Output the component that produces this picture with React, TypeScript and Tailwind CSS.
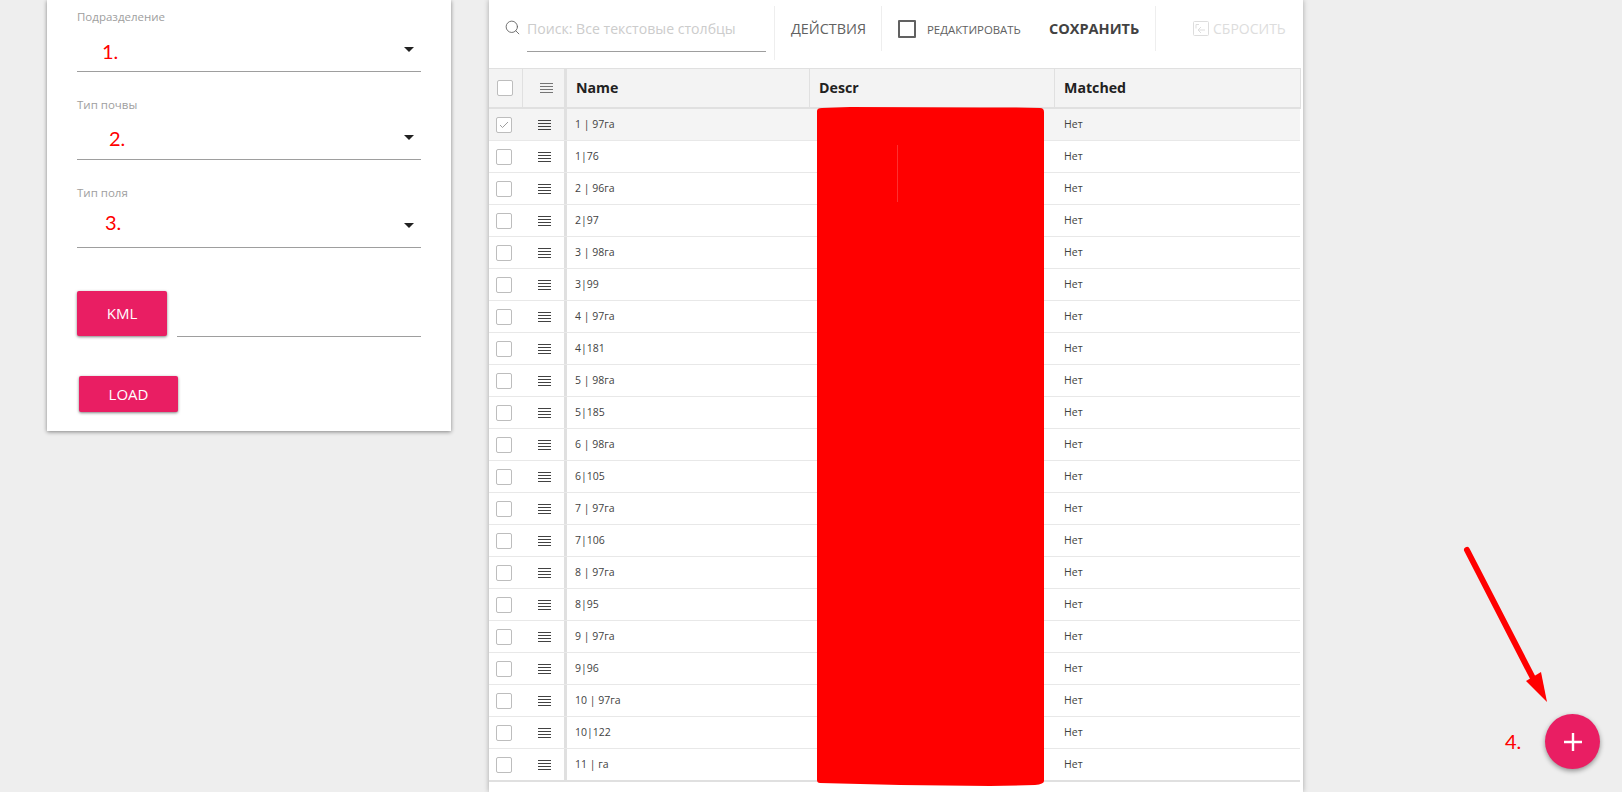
import { Search } from "lucide-react";

const rows = [
  "1 | 97га", "1|76", "2 | 96га", "2|97", "3 | 98га", "3|99", "4 | 97га", "4|181",
  "5 | 98га", "5|185", "6 | 98га", "6|105", "7 | 97га", "7|106", "8 | 97га", "8|95",
  "9 | 97га", "9|96", "10 | 97га", "10|122", "11 | га",
];

const fields = [
  { label: "Подразделение", mark: "1.", pad: "pl-[25px]", top: "pt-[15px]" },
  { label: "Тип почвы", mark: "2.", pad: "pl-[32px]", top: "pt-[14px]" },
  { label: "Тип поля", mark: "3.", pad: "pl-[28px]", top: "pt-[10px]" },
];

function Lines() {
  return (
    <svg width="13" height="10" viewBox="0 0 13 10">
      <path d="M0 0.5h13M0 3.5h13M0 6.5h13M0 9.5h13" stroke="currentColor" strokeWidth="1" fill="none" />
    </svg>
  );
}

function Box({ checked }: { checked?: boolean }) {
  return (
    <div className="w-4 h-4 rounded-[2px] border border-[#bdbdbd] bg-white flex items-center justify-center shrink-0">
      {checked && (
        <svg width="10" height="8" viewBox="0 0 10 8">
          <path d="M1 4l2.5 2.5L9 1" stroke="#9e9e9e" strokeWidth="1" fill="none" />
        </svg>
      )}
    </div>
  );
}

function Field({ label, mark, pad, top }: (typeof fields)[number]) {
  return (
    <div className="h-[88px] pt-[27px] flex flex-col">
      <label className="text-[11.5px] leading-[12px] text-[#9e9e9e]">{label}</label>
      <div className={`flex-1 flex justify-between border-b border-[#9e9e9e] ${pad}`}>
        <span className={`text-[20px] leading-[26px] text-[#ff0000] font-['Lato'] ${top}`}>{mark}</span>
        <div className="w-0 h-0 mt-[24px] mr-[7px] border-x-[5px] border-x-transparent border-t-[5px] border-t-[#212121]" />
      </div>
    </div>
  );
}

export default function App() {
  return (
    <div className="relative h-[792px] overflow-hidden bg-[#eeeeee] font-['Open_Sans',sans-serif] flex items-start pl-[47px] gap-[38px]">
      <div className="w-[404px] h-[431px] shrink-0 bg-white px-[30px] flex flex-col shadow-[0_1px_4px_rgba(0,0,0,0.45)]">
        <div className="-mt-[16px]">
          {fields.map((f) => (
            <Field key={f.label} {...f} />
          ))}
        </div>
        <div className="flex items-end gap-[10px] mt-[43px]">
          <button className="w-[90px] h-[45px] rounded-[2px] bg-[#e91e63] text-white text-[15px] shadow-[0_1px_3px_rgba(0,0,0,0.5)]">KML</button>
          <div className="flex-1 border-b border-[#9e9e9e] -mb-px" />
        </div>
        <button className="w-[99px] h-[36px] ml-[2px] mt-[40px] rounded-[2px] bg-[#e91e63] text-white text-[15px] shadow-[0_1px_3px_rgba(0,0,0,0.5)]">LOAD</button>
      </div>

      <div className="w-[814px] h-[792px] shrink-0 bg-white shadow-[0_0_5px_rgba(0,0,0,0.3)]">
        <div className="h-[68px] flex items-start relative">
          <Search size={17} strokeWidth={1.25} className="text-[#616161] mt-[19px] ml-[15px] shrink-0" />
          <div className="w-[239px] h-[52px] ml-[6px] pt-[19px] border-b border-[#9e9e9e] text-[14.1px] leading-[20px] text-[#cccccc] shrink-0 whitespace-nowrap">Поиск: Все текстовые столбцы</div>
          <div className="w-px h-[54px] mt-[6px] ml-[8px] bg-[#eeeeee]" />
          <div className="ml-[16px] pt-[19px] text-[14.4px] leading-[20px] text-[#616161] w-[75px] whitespace-nowrap">ДЕЙСТВИЯ</div>
          <div className="w-px h-[45px] mt-[6px] ml-[15px] bg-[#eeeeee]" />
          <div className="w-[18px] h-[18px] mt-[20px] ml-[16px] border-2 border-[#616161] rounded-[1px]" />
          <div className="ml-[11px] pt-[20px] text-[11.4px] leading-[20px] text-[#616161] w-[94px] whitespace-nowrap">РЕДАКТИРОВАТЬ</div>
          <div className="ml-[28px] pt-[19px] text-[14.5px] leading-[20px] font-bold text-[#424242] w-[90px] whitespace-nowrap">СОХРАНИТЬ</div>
          <div className="w-px h-[45px] mt-[6px] ml-[16px] bg-[#eeeeee]" />
          <svg width="16" height="15" viewBox="0 0 16 15" className="mt-[21px] ml-[37px] text-[#dddddd]">
            <rect x="0.5" y="0.5" width="15" height="14" rx="1" fill="none" stroke="currentColor" />
            <path d="M12 9H5.5M8 6L5 9l3 3M6 3.5h-3v4" fill="none" stroke="currentColor" />
          </svg>
          <div className="ml-[4px] pt-[19px] text-[14px] leading-[20px] text-[#dddddd] whitespace-nowrap">СБРОСИТЬ</div>
        </div>

        <div className="w-[812px]">
          <div className="h-[41px] flex bg-[#f3f3f3] border-y border-[#e0e0e0] border-b-2 text-[14.2px] font-bold text-[#212121]">
            <div className="w-[34px] border-r border-[#e0e0e0] flex items-center pl-2"><Box /></div>
            <div className="w-[41px] flex items-center pl-[17px] text-[#757575]"><Lines /></div>
            <div className="w-[246px] border-l-[3px] border-r border-[#e0e0e0] flex items-center pl-[9px]">Name</div>
            <div className="w-[245px] border-r border-[#e0e0e0] flex items-center pl-[9px]">Descr</div>
            <div className="flex-1 border-r border-[#e0e0e0] flex items-center pl-[9px]">Matched</div>
          </div>
          <div className="w-[811px] border-b-2 border-[#e0e0e0]">
            {rows.map((name, i) => (
              <div key={name} className={`h-[32px] flex border-b border-[#e8e8e8] text-[10.5px] text-[#424242] last:border-b-0 last:h-[31px] ${i === 0 ? "bg-[#f4f4f4]" : ""}`}>
                <div className="w-[34px] flex items-center pl-[7px]"><Box checked={i === 0} /></div>
                <div className="w-[41px] flex items-center pl-[15px] text-[#424242]"><Lines /></div>
                <div className="w-[246px] border-l-[3px] border-[#e0e0e0] flex items-center pl-[8px]">{name}</div>
                <div className="w-[245px]" />
                <div className="flex-1 flex items-center pl-[9px]">Нет</div>
              </div>
            ))}
          </div>
        </div>
      </div>

      {/* red scribble over the Descr column */}
      <svg width="240" height="690" viewBox="0 0 240 690" className="absolute left-[810px] top-[100px]">
        <path d="M7 11Q7 8 12 8L40 7L170 7.5L205 7.5L230 8Q234 8 234 12L234 681Q234 684 225 685L180 686L90 685L10 683Q7 683 7 680Z" fill="#ff0000" />
        <path d="M87.5 45V102" stroke="#ff3030" strokeWidth="1" />
      </svg>

      {/* annotation + fab */}
      <svg width="100" height="170" viewBox="0 0 100 170" className="absolute left-[1460px] top-[540px]">
        <path d="M7 10L76 144" stroke="#ff0000" strokeWidth="6" strokeLinecap="round" fill="none" />
        <path d="M66 141L81 132L87 162Z" fill="#ff0000" />
      </svg>
      <span className="absolute left-[1505px] top-[728px] text-[20px] leading-[26px] text-[#ff0000] font-['Lato']">4.</span>
      <button className="absolute left-[1545px] top-[714px] w-[55px] h-[55px] rounded-full bg-[#e91e63] flex items-center justify-center shadow-[0_2px_5px_rgba(0,0,0,0.4)]">
        <svg width="18" height="18" viewBox="0 0 18 18">
          <path d="M9 0v18M0 9h18" stroke="#ffffff" strokeWidth="2.4" fill="none" />
        </svg>
      </button>
    </div>
  );
}
